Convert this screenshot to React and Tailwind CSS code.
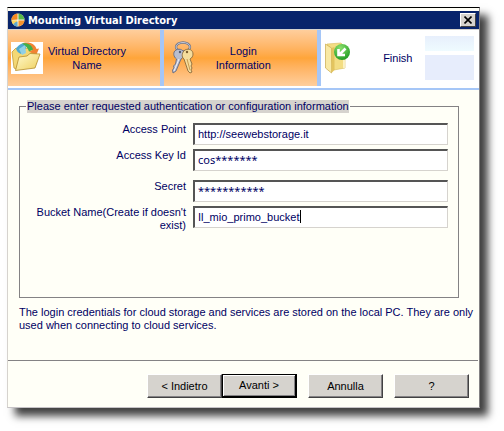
import { useState } from "react";

const FIELDS = [
  { id: "accessPoint", label: "Access Point", value: "http://seewebstorage.it" },
  { id: "accessKey", label: "Access Key Id", value: "cos*******", masked: true },
  { id: "secret", label: "Secret", value: "***********", masked: true, spaced: true },
  {
    id: "bucket",
    label: "Bucket Name(Create if doesn't exist)",
    value: "Il_mio_primo_bucket",
    caret: true,
  },
];

function AppIcon() {
  return (
    <svg viewBox="0 0 14 14" className="size-[14px] shrink-0">
      <circle cx="7" cy="7" r="6.5" fill="#f4f2dc" />
      <path d="M6.5 6.5V.5A6.5 6.5 0 0 0 .5 7z" fill="#f58a22" />
      <path d="M7.5 6.5V.5a6.5 6.5 0 0 1 6 6z" fill="#58b848" />
      <path d="M.5 7.2l5.5.3.5 6A6.5 6.5 0 0 1 .5 7.2z" fill="#ffd65c" />
      <path d="M7.5 7.5h6a6.5 6.5 0 0 1-6 6z" fill="#f7932b" />
      <path d="M2 11.5C4 9.5 5 9 6.5 8.6v4.8A6 6 0 0 1 2 11.5z" fill="#5fa8cf" />
    </svg>
  );
}

function OpenFolderIcon() {
  return (
    <svg viewBox="0 0 32 32" className="size-8 shrink-0 bg-white">
      <defs>
        <linearGradient id="folderFront" x1="0" y1="0" x2="1" y2="1">
          <stop offset="0" stopColor="#fffbd0" />
          <stop offset="1" stopColor="#efcf5c" />
        </linearGradient>
      </defs>
      <path d="M1 10l4-4 3 1 9-1 8 2v14L5 27 3 26z" fill="#f3d874" stroke="#c39b35" strokeWidth=".8" />
      <path d="M5 7C7 3 10 1.500 14 1l1 5-5 6C7 11 6 9 5 7z" fill="#4fa9cf" />
      <path d="M8 7l6-4 1 8-4 2z" fill="#8fd0e6" />
      <path d="M12 1c7-1.500 12 1 13.500 6l2.500-.5-3 7-7-4 3-1C20 5 17 3 12 1z" fill="#f18333" />
      <path d="M11 1.500c6-1 10 1.500 11 6l-4 2C17 6 15 4 11 1.500z" fill="#43b04a" />
      <path d="M8 15l8-1 3-2.500 10 .5-5 14L4.500 28.500z" fill="url(#folderFront)" stroke="#b58d2b" strokeWidth=".8" />
    </svg>
  );
}

function KeysIcon() {
  return (
    <svg viewBox="0 0 24 34" className="h-[34px] w-6 shrink-0">
      <ellipse cx="12" cy="6" rx="7" ry="4.500" fill="none" stroke="#6f7487" strokeWidth="2.400" />
      <ellipse cx="12" cy="6" rx="7" ry="4.500" fill="none" stroke="#c3c8d8" strokeWidth="1" />
      <path
        d="M5 9c4-2 8 0 8 4 0 2-1 4-3 5L5 30l-3 2-.5-3 1.500-2-.5-2 2-2 1-5c-3-2-4-7-.5-9z"
        fill="#b9bed0"
        stroke="#656b82"
        strokeWidth=".9"
      />
      <path d="M8 18L3 30" stroke="#f0f2fa" strokeWidth="1" />
      <path
        d="M14 9c4-2 8 0 8 4 0 2-1 4-3 5l2 5-1 2 1 2-1 2 1 2-2 1-2-2-4-12c-3-2-2-7 1-9z"
        fill="#f5dc9c"
        stroke="#8b6b3c"
        strokeWidth=".9"
      />
      <path d="M16 18l3 11" stroke="#c99b4e" strokeWidth="1" />
      <circle cx="9" cy="11" r="1.200" fill="#555b70" />
      <circle cx="16" cy="11" r="1.200" fill="#7a5c30" />
    </svg>
  );
}

function FinishIcon() {
  return (
    <svg viewBox="0 0 26 32" className="h-8 w-[26px] shrink-0">
      <defs>
        <radialGradient id="badge" cx=".4" cy=".25" r=".8">
          <stop offset="0" stopColor="#8be06d" />
          <stop offset="1" stopColor="#1d9a22" />
        </radialGradient>
      </defs>
      <path d="M2 2l14-1 4 4v21l-11 2z" fill="#f3dd83" stroke="#d9bd5c" strokeWidth=".6" />
      <path d="M.5 2l6 4v25l-6-5z" fill="#f9e9a4" stroke="#c9a94a" strokeWidth=".7" />
      <path d="M6.500 6l3-1v23l-3 3z" fill="#e3c45e" />
      <path d="M19 18v8" stroke="#fff8d8" strokeWidth="1.500" />
      <circle cx="17" cy="10" r="8" fill="url(#badge)" />
      <path d="M20.500 6.500l-6 6M13.500 7v6h6.500" fill="none" stroke="#fff" strokeWidth="2.600" />
    </svg>
  );
}

function Step({ icon, children }) {
  return (
    <li className="flex items-center gap-[3px] border-r-4 border-[#a5c6f7] bg-linear-to-b from-[#ffce9c] via-[#ffa539] to-[#ffce9c] pl-[3px]">
      <span className="flex w-8 shrink-0 justify-center">{icon}</span>
      <span className="w-[82px] text-center">{children}</span>
    </li>
  );
}

function Field({ field }) {
  const [value, setValue] = useState(field.value);
  return (
    <div className={field.spaced ? "mt-[5px] flex items-start" : "flex items-start"}>
      <label htmlFor={field.id} className="w-[166px] shrink-0 pl-3 text-right">
        {field.label}
      </label>
      <div
        className={
          field.masked ? "relative ml-[7px] flex-1 font-['Noto_Sans',sans-serif]" : "relative ml-[7px] flex-1"
        }
      >
        <input
          id={field.id}
          value={value}
          onChange={(e) => setValue(e.target.value)}
          className="block h-[22px] w-full border border-t-2 border-l-2 border-t-[#555] border-r-[#d6d3ce] border-b-[#d6d3ce] border-l-[#555] bg-white px-[3px] pb-[2px] outline-none"
        />
        {field.caret && <span className="absolute top-1 left-[107px] h-[13px] w-px bg-black" />}
      </div>
    </div>
  );
}

function Button({ primary, children }) {
  return (
    <button
      className={
        primary
          ? "h-6 w-[75px] border border-r-2 border-b-2 border-black bg-[#d6d3ce] text-black shadow-[inset_1px_1px_#fff,inset_-1px_-1px_#848284]"
          : "h-6 w-[75px] border border-t-white border-r-[#424142] border-b-[#424142] border-l-white bg-[#d6d3ce] text-black shadow-[inset_-1px_-1px_#848284]"
      }
    >
      {children}
    </button>
  );
}

export default function App() {
  return (
    <div className="bg-white pt-[7px] pr-6 pb-6 pl-[7px] font-['Liberation_Sans',Arial,sans-serif] text-[11px] leading-[13px] text-[#000063]">
      <div className="border border-t-black border-r-[#848284] border-b-[#c6c3c6] border-l-[#d6d3ce] bg-[#fffff7] shadow-[8px_8px_8px_rgba(0,0,0,0.75)]">
        <header className="mt-[3px] flex h-[18px] items-center bg-[#08246b] pr-[3px] pl-[3px] text-white">
          <AppIcon />
          <h1 className="ml-[3px] flex-1 font-['DejaVu_Sans_Condensed','DejaVu_Sans',sans-serif] font-bold">
            Mounting Virtual Directory
          </h1>
          <button
            aria-label="Close"
            className="flex h-[14px] w-4 items-center justify-center border border-t-white border-r-[#424142] border-b-[#424142] border-l-white bg-[#d6d3ce]"
          >
            <svg viewBox="0 0 8 8" className="size-2">
              <path d="M.5.5l7 7M7.500.5l-7 7" stroke="#000" strokeWidth="1.600" />
            </svg>
          </button>
        </header>

        <ol className="grid h-[61px] grid-cols-[156fr_156fr_158fr] border-t border-b-2 border-t-[#d6d3ce] border-b-[#a5c6f7] bg-white pb-[2px] leading-[14px]">
          <Step icon={<OpenFolderIcon />}>Virtual Directory Name</Step>
          <Step icon={<KeysIcon />}>Login Information</Step>
          <li className="flex items-center pr-[5px] pl-1">
            <FinishIcon />
            <span className="flex-1 pl-5 text-center">Finish</span>
            <span className="flex h-11 w-[49px] flex-col gap-1">
              <span className="h-[15px] bg-linear-to-b from-[#e7effc] to-[#effbff]" />
              <span className="flex-1 bg-[#e7edfc]" />
            </span>
          </li>
        </ol>

        <main className="pt-[10px] pr-5 pl-[11px]">
          <fieldset className="h-[198px] border border-[#848284] pr-[10px]">
            <legend className="ml-[6px] px-[1px]">
              <span className="block bg-[#d6d3ce]">
                Please enter requested authentication or configuration information
              </span>
            </legend>
            <div className="flex flex-col gap-1 pt-[10px]">
              {FIELDS.map((field) => (
                <Field key={field.id} field={field} />
              ))}
            </div>
          </fieldset>
          <p className="-mr-5 pt-2">
            The login credentials for cloud storage and services are stored on the local PC. They are only used when
            connecting to cloud services.
          </p>
        </main>

        <footer className="mt-7 mr-px flex justify-end border-t border-[#848284] pt-[13px] pr-[9px] pb-[9px]">
          <Button>&lt; Indietro</Button>
          <Button primary>Avanti &gt;</Button>
          <span className="w-[11px]" />
          <Button>Annulla</Button>
          <span className="w-[11px]" />
          <Button>?</Button>
        </footer>
      </div>
    </div>
  );
}
